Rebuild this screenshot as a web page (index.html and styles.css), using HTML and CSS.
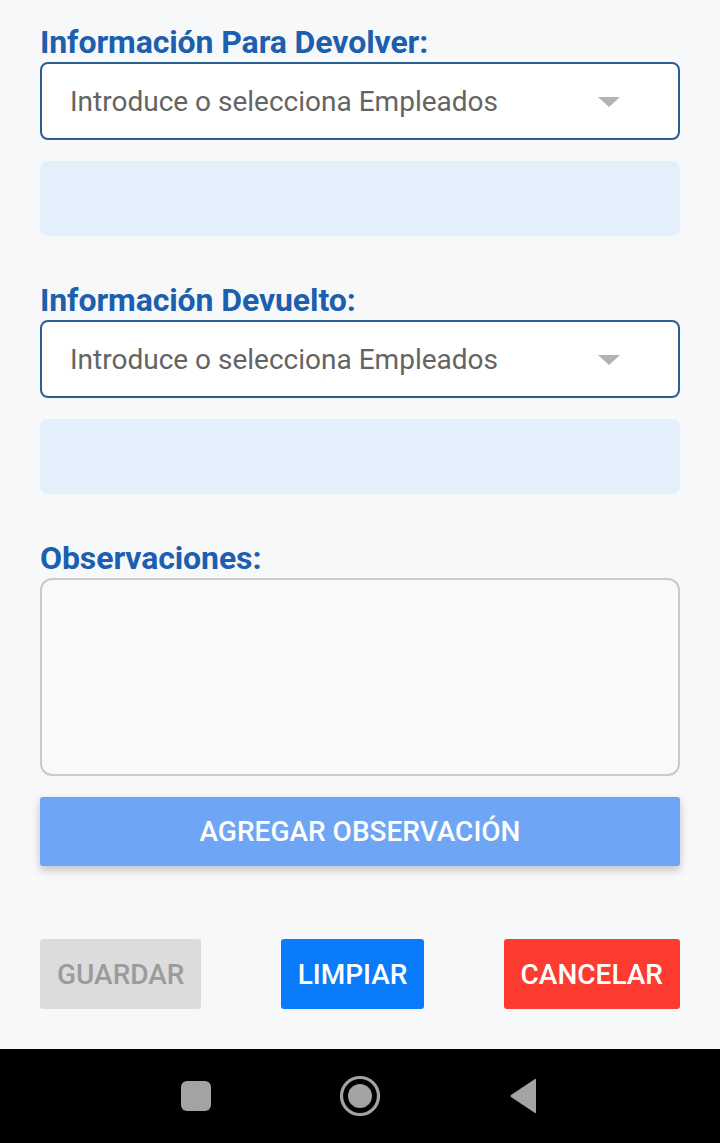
FILE: index.html
```html
<!DOCTYPE html>
<html lang="es">
<head>
<meta charset="utf-8">
<title>Devolución</title>
<link rel="stylesheet" href="styles.css">
</head>
<body>
<main class="form">
  <div class="label first">Información Para Devolver:</div>
  <div class="select">
    <span class="placeholder">Introduce o selecciona Empleados</span>
    <span class="caret"></span>
  </div>
  <div class="info-box"></div>

  <div class="label">Información Devuelto:</div>
  <div class="select">
    <span class="placeholder">Introduce o selecciona Empleados</span>
    <span class="caret"></span>
  </div>
  <div class="info-box"></div>

  <div class="label">Observaciones:</div>
  <div class="textarea"></div>
  <button class="btn btn-add">AGREGAR OBSERVACIÓN</button>

  <div class="actions">
    <button class="btn btn-save">GUARDAR</button>
    <button class="btn btn-clear">LIMPIAR</button>
    <button class="btn btn-cancel">CANCELAR</button>
  </div>
</main>
<nav class="navbar">
  <span class="nav-slot">
    <svg width="32" height="32" viewBox="0 0 32 32"><rect x="1" y="1" width="30" height="30" rx="6" fill="#a3a3a3"/></svg>
  </span>
  <span class="nav-slot">
    <svg width="42" height="42" viewBox="0 0 42 42"><circle cx="21" cy="21" r="18.5" fill="none" stroke="#a3a3a3" stroke-width="3.2"/><circle cx="21" cy="21" r="12" fill="#a3a3a3"/></svg>
  </span>
  <span class="nav-slot">
    <svg width="30" height="36" viewBox="0 0 30 36"><path d="M27 1.5 L27 34.5 Q27 35.5 26 35 L2 19 Q1 18 2 17 L26 1 Q27 0.5 27 1.5 Z" fill="#a3a3a3"/></svg>
  </span>
</nav>
</body>
</html>
```

FILE: styles.css
```css
* { box-sizing: border-box; }

html, body {
  margin: 0;
  padding: 0;
  background: #f7f8fa;
  font-family: Roboto, "Noto Sans", "Liberation Sans", sans-serif;
}

.form {
  display: flex;
  flex-direction: column;
  padding: 28px 40px 40px;
}

.label {
  margin-top: 50px;
  height: 34px;
  line-height: 28px;
  font-size: 32px;
  font-weight: 700;
  color: #1c5fae;
  letter-spacing: -0.1px;
}

.label.first { margin-top: 0; }

.select {
  height: 78px;
  background: #ffffff;
  border: 2px solid #2a5f94;
  border-radius: 8px;
  display: flex;
  align-items: center;
  justify-content: space-between;
  padding: 0 58px 0 28px;
}

.placeholder {
  font-size: 28px;
  color: #646464;
}

.caret {
  width: 0;
  height: 0;
  border-left: 11px solid transparent;
  border-right: 11px solid transparent;
  border-top: 10px solid #b2b2b2;
  margin-top: 2px;
}

.info-box {
  margin-top: 21px;
  height: 75px;
  background: #e3f0fc;
  border-radius: 8px;
}

.textarea {
  height: 198px;
  border: 2px solid #cacaca;
  border-radius: 12px;
  background: #f8f9fa;
}

.btn {
  border: none;
  font-family: Roboto, "Noto Sans", "Liberation Sans", sans-serif;
  font-weight: 500;
  font-size: 28px;
  border-radius: 3px;
  color: #ffffff;
}

.btn-add {
  margin-top: 21px;
  height: 69px;
  background: #6fa5f5;
  box-shadow: 0 4px 8px rgba(0, 0, 0, 0.22);
}

.actions {
  margin-top: 73px;
  display: flex;
  justify-content: space-between;
}

.actions .btn {
  height: 70px;
  padding: 0 17px;
}

.btn-save {
  background: #dcdcdd;
  color: #9b9b9b;
}

.btn-clear {
  background: #0a7bfa;
}

.btn-cancel {
  background: #fd3b30;
}

.navbar {
  height: 94px;
  background: #000000;
  display: flex;
  justify-content: center;
  align-items: center;
  gap: 104px;
}

.nav-slot {
  width: 60px;
  height: 60px;
  display: flex;
  align-items: center;
  justify-content: center;
}
```
